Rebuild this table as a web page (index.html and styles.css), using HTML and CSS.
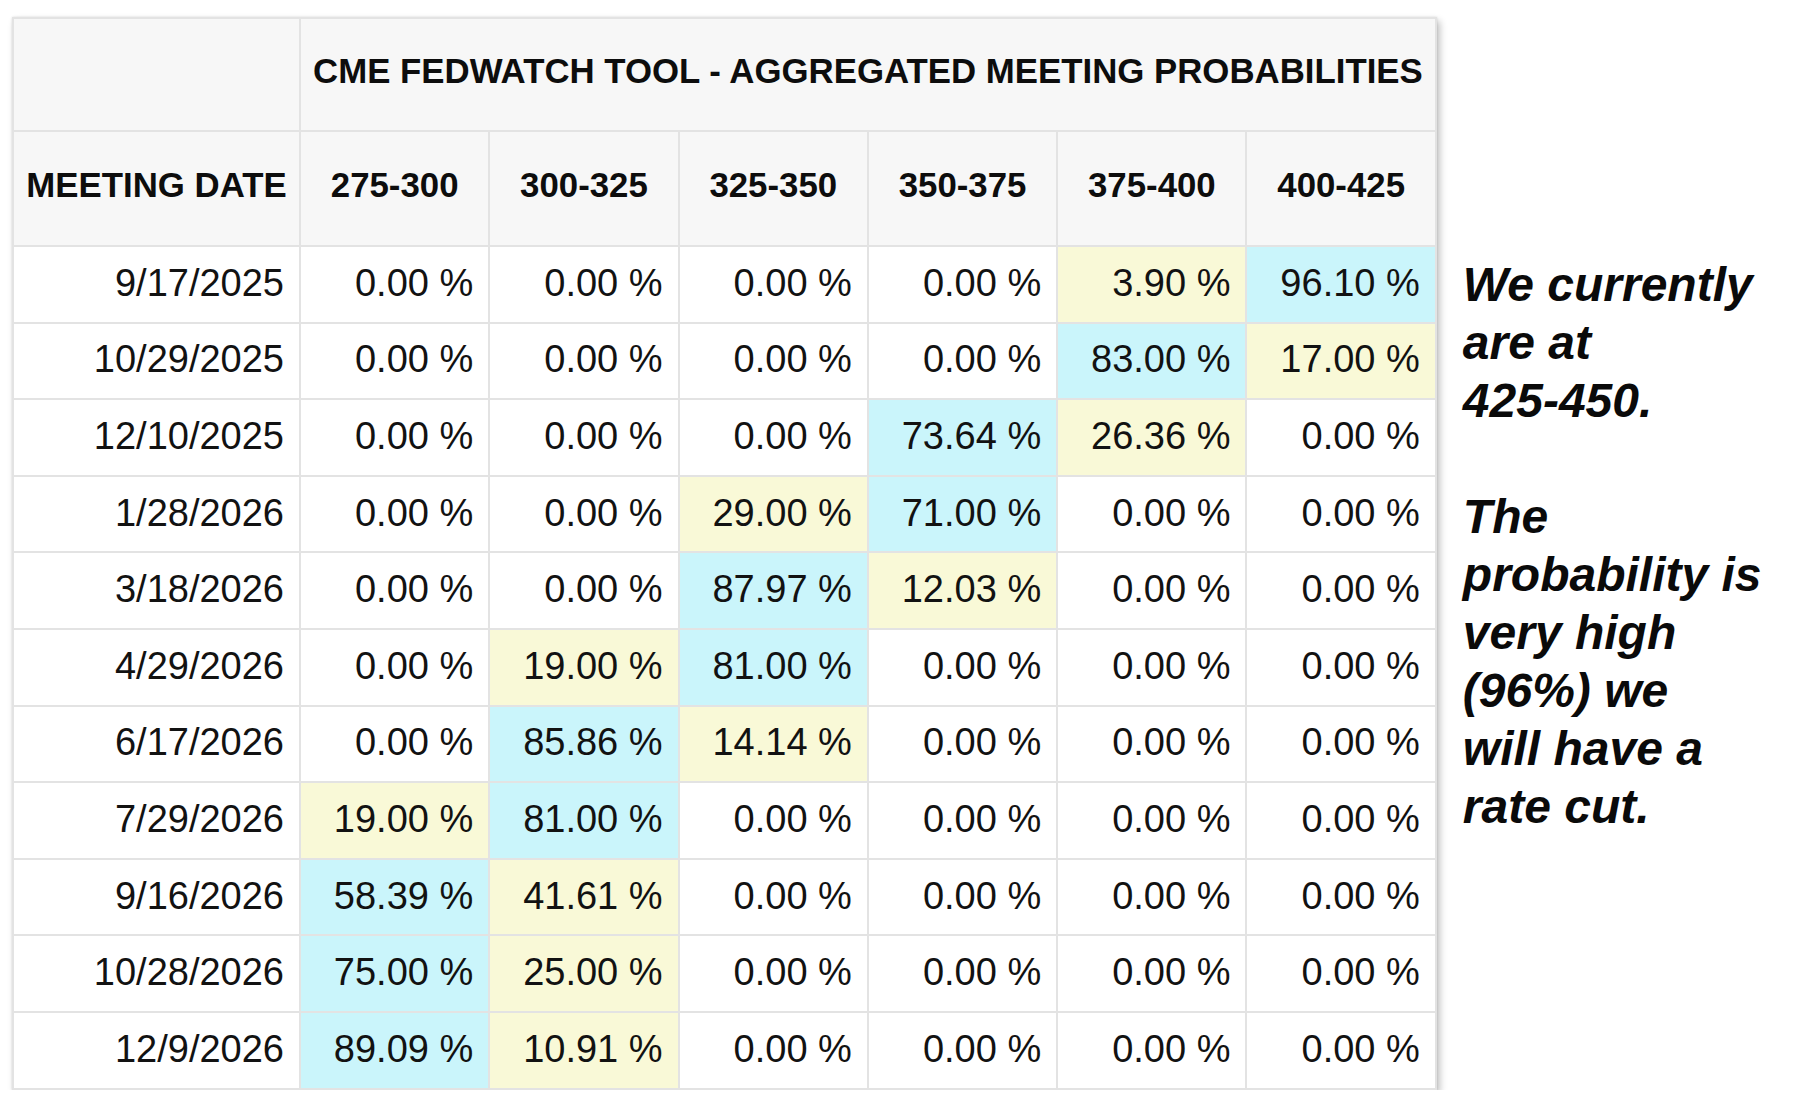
FILE: index.html
```html
<!DOCTYPE html>
<html lang="en">
<head>
<meta charset="utf-8">
<title>CME FedWatch Tool - Aggregated Meeting Probabilities</title>
<link rel="stylesheet" href="styles.css">
</head>
<body>
<div class="page">
  <table class="fed">
    <colgroup>
      <col class="c-date">
      <col class="c-rate"><col class="c-rate"><col class="c-rate">
      <col class="c-rate"><col class="c-rate"><col class="c-rate">
    </colgroup>
    <thead>
      <tr class="title-row">
        <th class="hd"></th>
        <th class="hd" colspan="6">CME FEDWATCH TOOL - AGGREGATED MEETING PROBABILITIES</th>
      </tr>
      <tr class="head-row">
        <th class="hd">MEETING DATE</th>
        <th class="hd">275-300</th>
        <th class="hd">300-325</th>
        <th class="hd">325-350</th>
        <th class="hd">350-375</th>
        <th class="hd">375-400</th>
        <th class="hd">400-425</th>
      </tr>
    </thead>
    <tbody>
      <tr><td>9/17/2025</td><td>0.00 %</td><td>0.00 %</td><td>0.00 %</td><td>0.00 %</td><td class="y">3.90 %</td><td class="b">96.10 %</td></tr>
      <tr><td>10/29/2025</td><td>0.00 %</td><td>0.00 %</td><td>0.00 %</td><td>0.00 %</td><td class="b">83.00 %</td><td class="y">17.00 %</td></tr>
      <tr><td>12/10/2025</td><td>0.00 %</td><td>0.00 %</td><td>0.00 %</td><td class="b">73.64 %</td><td class="y">26.36 %</td><td>0.00 %</td></tr>
      <tr><td>1/28/2026</td><td>0.00 %</td><td>0.00 %</td><td class="y">29.00 %</td><td class="b">71.00 %</td><td>0.00 %</td><td>0.00 %</td></tr>
      <tr><td>3/18/2026</td><td>0.00 %</td><td>0.00 %</td><td class="b">87.97 %</td><td class="y">12.03 %</td><td>0.00 %</td><td>0.00 %</td></tr>
      <tr><td>4/29/2026</td><td>0.00 %</td><td class="y">19.00 %</td><td class="b">81.00 %</td><td>0.00 %</td><td>0.00 %</td><td>0.00 %</td></tr>
      <tr><td>6/17/2026</td><td>0.00 %</td><td class="b">85.86 %</td><td class="y">14.14 %</td><td>0.00 %</td><td>0.00 %</td><td>0.00 %</td></tr>
      <tr><td>7/29/2026</td><td class="y">19.00 %</td><td class="b">81.00 %</td><td>0.00 %</td><td>0.00 %</td><td>0.00 %</td><td>0.00 %</td></tr>
      <tr><td>9/16/2026</td><td class="b">58.39 %</td><td class="y">41.61 %</td><td>0.00 %</td><td>0.00 %</td><td>0.00 %</td><td>0.00 %</td></tr>
      <tr><td>10/28/2026</td><td class="b">75.00 %</td><td class="y">25.00 %</td><td>0.00 %</td><td>0.00 %</td><td>0.00 %</td><td>0.00 %</td></tr>
      <tr><td>12/9/2026</td><td class="b">89.09 %</td><td class="y">10.91 %</td><td>0.00 %</td><td>0.00 %</td><td>0.00 %</td><td>0.00 %</td></tr>
    </tbody>
  </table>
  <div class="note">
    <p>We currently<br>are at<br>425-450.</p>
    <p>The<br>probability is<br>very high<br>(96%) we<br>will have a<br>rate cut.</p>
  </div>
</div>
</body>
</html>
```
FILE: styles.css
```css
html, body {
  margin: 0;
  padding: 0;
  background: #ffffff;
}

body {
  font-family: "Liberation Sans", Arial, Helvetica, sans-serif;
  color: #111111;
}

.page {
  display: flex;
  align-items: flex-start;
  padding: 17px 0 0 12px;
}

.fed {
  border-collapse: collapse;
  table-layout: fixed;
  width: 1423px;
  box-shadow: 0 0 2px rgba(0, 0, 0, 0.12), 3px 4px 7px rgba(0, 0, 0, 0.24);
  background: #ffffff;
}

.c-date { width: 287px; }
.c-rate { width: 189.3px; }

.fed th,
.fed td {
  border: 2px solid #e3e3e3;
  padding: 0 15px 2px 8px;
  vertical-align: middle;
  white-space: nowrap;
}

.fed th.hd {
  background: #f7f7f7;
  font-weight: bold;
  font-size: 34.8px;
  letter-spacing: 0;
  text-align: center;
  padding: 0 2px 7px;
  color: #0d0d0d;
}

.title-row { height: 113px; }
.head-row { height: 115px; }

.fed tbody tr { height: 76.6px; }

.fed td {
  font-size: 38px;
  text-align: right;
  color: #121212;
}

.fed td.y { background: #f9f9d7; }
.fed td.b { background: #caf5fb; }

.note {
  margin: 239px 0 0 26px;
  font-size: 48px;
  font-weight: bold;
  font-style: italic;
  line-height: 58px;
  color: #0a0a0a;
}

.note p {
  margin: 0 0 58px 0;
}
```
